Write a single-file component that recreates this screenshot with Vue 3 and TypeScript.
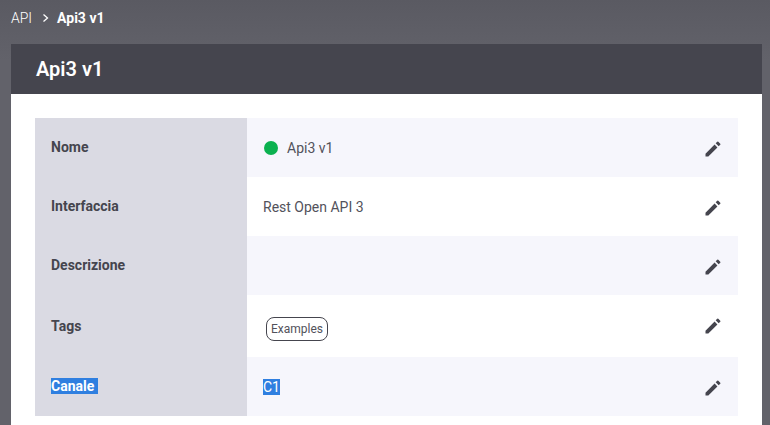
<script setup lang="ts">
interface Row { label: string; value?: string; kind: 'status' | 'text' | 'tag' | 'selected' | 'empty'; cls: string }
const rows: Row[] = [
  { label: 'Nome', value: 'Api3 v1', kind: 'status', cls: 'r59' },
  { label: 'Interfaccia', value: 'Rest Open API 3', kind: 'text', cls: 'r59' },
  { label: 'Descrizione', kind: 'empty', cls: 'r59' },
  { label: 'Tags', value: 'Examples', kind: 'tag', cls: 'r62' },
  { label: 'Canale', value: 'C1', kind: 'selected', cls: 'r59' },
]
</script>

<template>
  <div class="page">
    <nav class="crumbs">
      <span class="crumb">API</span>
      <svg class="chev" viewBox="0 0 8 10" width="8" height="10"><path d="M1.5 1.5 5.5 5l-4 3.5" fill="none" stroke="#fff" stroke-width="1.3" /></svg>
      <span class="crumb-cur">Api3 v1</span>
    </nav>
    <main class="card">
      <header class="card-head">Api3 v1</header>
      <div class="card-body">
        <div v-for="(r, i) in rows" :key="r.label" class="row" :class="[r.cls, i % 2 === 0 ? 'odd' : 'even']">
          <div class="label">
            <span :class="{ sel: r.kind === 'selected' }">{{ r.label }}<template v-if="r.kind === 'selected'">&nbsp;</template></span>
          </div>
          <div class="value">
            <template v-if="r.kind === 'status'">
              <span class="dot"></span><span>{{ r.value }}</span>
            </template>
            <span v-else-if="r.kind === 'tag'" class="tag">{{ r.value }}</span>
            <span v-else-if="r.kind === 'selected'" class="sel">{{ r.value }}</span>
            <span v-else-if="r.kind === 'text'">{{ r.value }}</span>
          </div>
          <svg class="edit" viewBox="0 0 24 24" width="20" height="20"><path d="M3 17.6V21h3.4L17.3 10.1l-3.4-3.4L3 17.6zM20.7 6.9a.9.9 0 0 0 0-1.3l-2.3-2.3a.9.9 0 0 0-1.3 0l-1.9 1.9 3.6 3.6 1.9-1.9z" fill="#45454e" /></svg>
        </div>
      </div>
    </main>
  </div>
</template>

<style>
html, body { margin: 0; overflow: hidden; }
</style>

<style scoped>
.page {
  width: 770px;
  height: 425px;
  box-sizing: border-box;
  overflow: hidden;
  background: linear-gradient(#5a5a62, #62626a 60px);
  font-family: Roboto, sans-serif;
  color: #45454e;
}
.crumbs {
  height: 44px;
  box-sizing: border-box;
  padding: 0 0 8px 11px;
  display: flex;
  align-items: center;
  font-size: 14px;
  color: #fff;
}
.crumb { font-weight: 300; }
.chev { margin: 0 7px 0 10px; }
.crumb-cur { font-weight: 700; }
.card { margin: 0 8px 0 11px; background: #fff; height: 381px; }
.card-head {
  height: 50px;
  box-sizing: border-box;
  padding-left: 25px;
  display: flex;
  align-items: center;
  background: #45454e;
  color: #fff;
  font-size: 20px;
  font-weight: 600;
}
.card-body { padding: 24px 24px 0; }
.row { display: flex; align-items: stretch; position: relative; font-size: 14px; }
.r59 { height: 59px; }
.r62 { height: 62px; }
.odd .value { background: #f6f6fc; }
.even .value { background: #fff; }
.label {
  width: 212px;
  flex: none;
  box-sizing: border-box;
  padding: 20px 0 0 16px;
  background: #dadae3;
  font-weight: 700;
  line-height: 18px;
}
.r62 .label { padding-top: 22px; }
.value {
  flex: 1;
  box-sizing: border-box;
  padding: 21px 0 0 16px;
  line-height: 18px;
  display: flex;
  align-items: flex-start;
  color: #52525b;
}
.dot {
  width: 14px;
  height: 14px;
  border-radius: 50%;
  background: #0bb14f;
  margin: 2px 9px 0 1px;
}
.tag {
  margin: 1px 0 0 3px;
  padding: 0 4px;
  height: 22px;
  line-height: 22px;
  border: 1px solid #45454e;
  border-radius: 8px;
  font-size: 12px;
}
.sel {
  display: inline-block;
  line-height: 16px;
  margin-top: 1px;
  background: #2f7fe0;
  color: #fff;
}
.edit { position: absolute; right: 15px; top: 21px; }
</style>
